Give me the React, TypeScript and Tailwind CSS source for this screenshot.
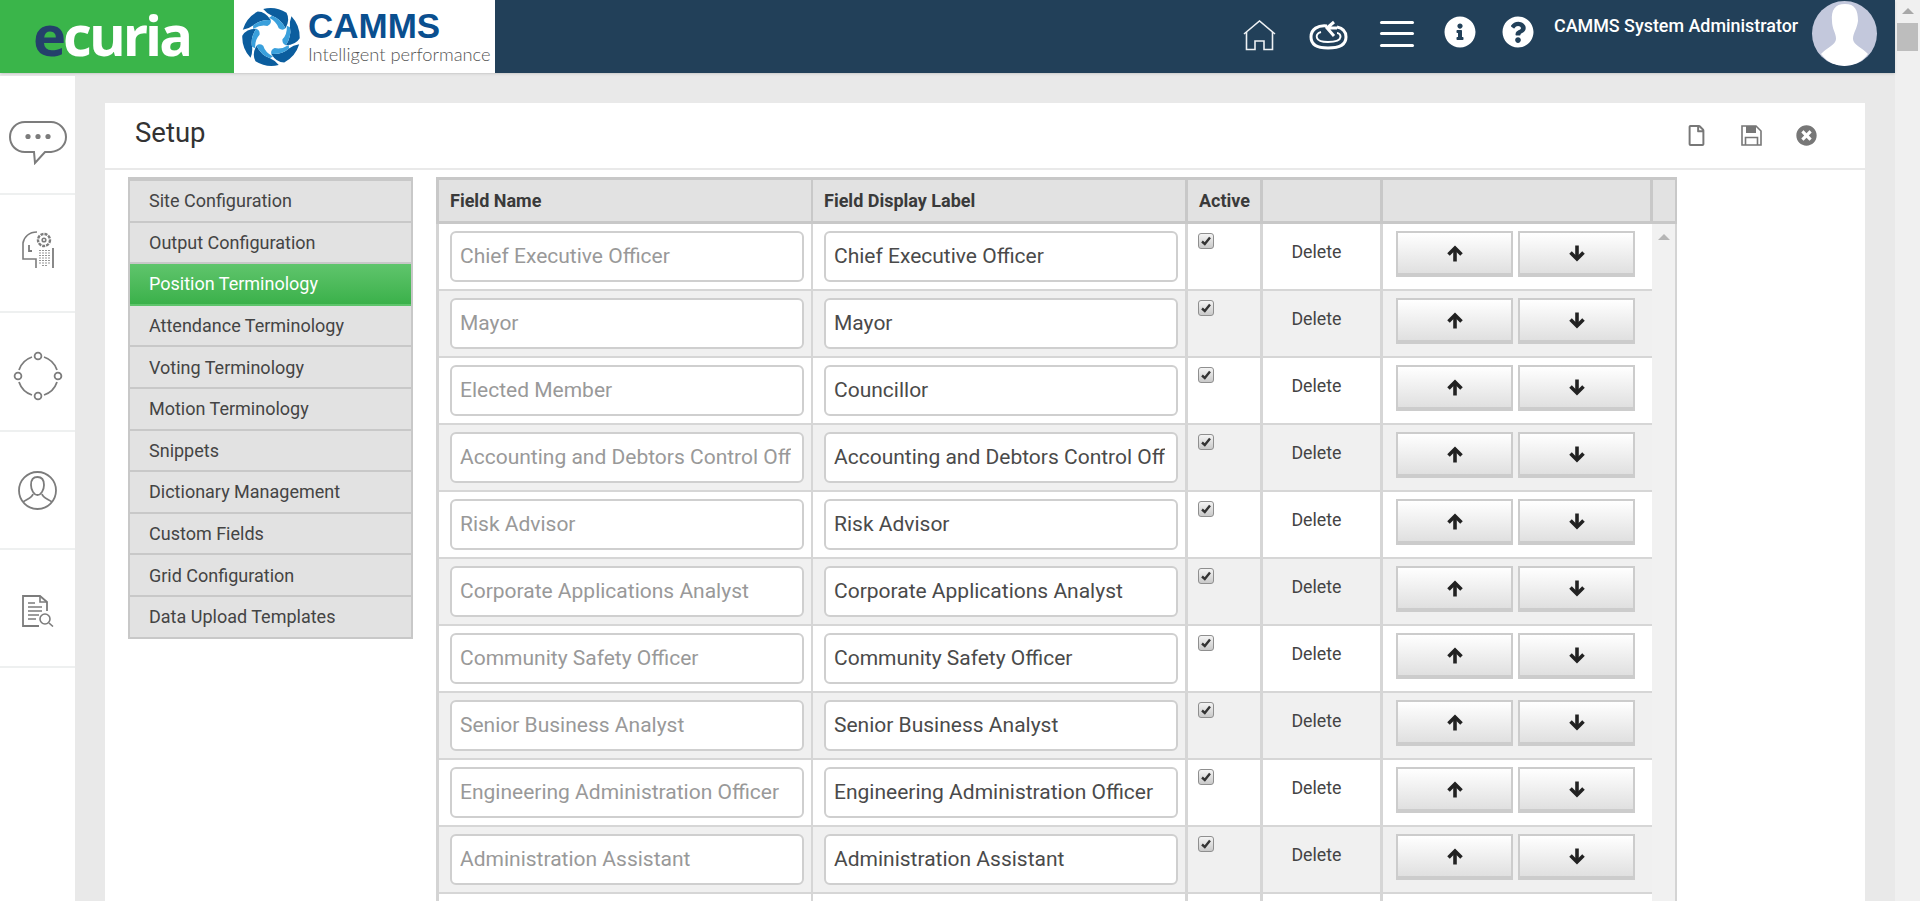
import { FaInfoCircle, FaQuestionCircle, FaRegFile, FaTimesCircle } from "react-icons/fa";

const menuItems = [
  "Site Configuration",
  "Output Configuration",
  "Position Terminology",
  "Attendance Terminology",
  "Voting Terminology",
  "Motion Terminology",
  "Snippets",
  "Dictionary Management",
  "Custom Fields",
  "Grid Configuration",
  "Data Upload Templates",
];

const rows = [
  ["Chief Executive Officer", "Chief Executive Officer"],
  ["Mayor", "Mayor"],
  ["Elected Member", "Councillor"],
  ["Accounting and Debtors Control Officer", "Accounting and Debtors Control Officer"],
  ["Risk Advisor", "Risk Advisor"],
  ["Corporate Applications Analyst", "Corporate Applications Analyst"],
  ["Community Safety Officer", "Community Safety Officer"],
  ["Senior Business Analyst", "Senior Business Analyst"],
  ["Engineering Administration Officer", "Engineering Administration Officer"],
  ["Administration Assistant", "Administration Assistant"],
  ["", ""],
];

function Swirl() {
  const angles = [0, 60, 120, 180, 240, 300];
  return (
    <svg width="62" height="62" viewBox="0 0 64 64" className="shrink-0">
      {angles.map((a) => (
        <g key={a} transform={`rotate(${a} 32 32)`}>
          <path d="M24 3 Q37 0 48 7 Q52 14 47 23 Q42 13 33 10 Q28 8 24 3Z" fill="#0b5d9e" />
          <path d="M33 10 Q42 13 47 23 Q44 26 40 23 Q38 16 30 12Z" fill="#3aa0dc" />
        </g>
      ))}
    </svg>
  );
}

function Avatar() {
  return (
    <svg width="65" height="65" viewBox="0 0 65 65" className="rounded-full bg-[#c3c8dc]">
      <path
        d="M33 3 C23 3 19 9 20 20 C20 28 24 32 24 38 C24 44 14 47 9 53 C16 62 24 65 32 65 C42 65 50 61 56 53 C51 47 41 44 41 38 C41 32 45 28 46 20 C46 9 43 3 33 3Z"
        fill="#fff"
      />
    </svg>
  );
}

function HomeIcon() {
  return (
    <svg width="33" height="31" viewBox="0 0 33 31" fill="none" stroke="#eef1f4" strokeWidth="1.6">
      <path d="M1 14 L16.5 1 L32 14" />
      <path d="M3.5 12 V29.5 H12 V21 H21 V29.5 H29.5 V12" />
    </svg>
  );
}

function CloudIcon() {
  return (
    <svg width="39" height="30" viewBox="0 0 39 30" fill="none" stroke="#fff" strokeWidth="3">
      <path d="M18 6 C9 5 2 9 2 17 C2 25 9 28 19 28 C30 28 37 25 37 17 C37 11 33 8 28 7" />
      <path d="M12 12 C8 13 7 16 8 18 C9 21 13 22 19 22 C26 22 31 21 31.500 17 C31.500 15 30 13 28 13" strokeWidth="2" />
      <path d="M25 2 L18 8 L25 16 M18 8 L28 8" strokeWidth="3" />
    </svg>
  );
}

function ChatIcon() {
  return (
    <svg width="58" height="44" viewBox="0 0 58 44" fill="none" stroke="#7c7c7c" strokeWidth="2">
      <path d="M16 1 H42 C50 1 57 8 57 16 C57 24 51 30 42 31 H36 L26 42 L25 31 H16 C7 31 1 24 1 16 C1 8 7 1 16 1Z" />
      <circle cx="19" cy="15.5" r="2.6" fill="#7c7c7c" stroke="none" />
      <circle cx="29" cy="15.5" r="2.6" fill="#7c7c7c" stroke="none" />
      <circle cx="39" cy="15.5" r="2.6" fill="#7c7c7c" stroke="none" />
    </svg>
  );
}

function HeadIcon() {
  return (
    <svg width="32" height="38" viewBox="0 0 32 38" fill="none" stroke="#7c7c7c" strokeWidth="1.6">
      <path d="M15 1 C7 1 2 6 1 12 V28 H14 V37" />
      <path d="M7 14 V20 H10" strokeWidth="1.8" />
      <circle cx="22" cy="9" r="6" strokeDasharray="3 1" strokeWidth="2.4" />
      <circle cx="22" cy="9" r="1.8" />
      <path d="M31 17 V37" strokeWidth="1.8" />
      <path d="M18 19 V34 M21 19 V36 M24 19 V36 M27 19 V34" strokeDasharray="1 1.5" />
    </svg>
  );
}

function CycleIcon() {
  return (
    <svg width="50" height="50" viewBox="0 0 50 50" fill="none" stroke="#7c7c7c" strokeWidth="1.8">
      <circle cx="25" cy="5" r="3.4" />
      <circle cx="25" cy="45" r="3.4" />
      <circle cx="5" cy="25" r="3.4" />
      <circle cx="45" cy="25" r="3.4" />
      <path d="M31 6 C37 8 42 13 44 19 M44 31 C42 37 37 42 31 44 M19 44 C13 42 8 37 6 31 M6 19 C8 13 13 8 19 6" />
    </svg>
  );
}

function PersonIcon() {
  return (
    <svg width="39" height="39" viewBox="0 0 39 39" fill="none" stroke="#7c7c7c" strokeWidth="1.8">
      <circle cx="19.5" cy="19.5" r="18.5" />
      <path d="M13 14 C13 8 16 6 19.5 6 C23 6 26 8 26 14 C26 19 23 24 19.5 24 C16 24 13 19 13 14Z" />
      <path d="M15 23 C14 27 9 28 5 31 M24 23 C25 27 30 28 34 31" />
    </svg>
  );
}

function DocSearchIcon() {
  return (
    <svg width="32" height="32" viewBox="0 0 32 32" fill="none" stroke="#7c7c7c" strokeWidth="1.6">
      <path d="M25 16 V7 L18 1 H1 V31 H17" strokeWidth="1.8" />
      <path d="M18 1 V7 H25" />
      <path d="M6 8 H13 M6 12 H20 M6 16 H20 M6 20 H17 M6 24 H14" />
      <circle cx="23" cy="24" r="5" />
      <path d="M27 28 L31 31.5" />
    </svg>
  );
}

function SaveIcon() {
  return (
    <svg width="21" height="21" viewBox="0 0 21 21" fill="none" stroke="#777" strokeWidth="1.6">
      <path d="M1 1 H15 L20 6 V20 H1Z" />
      <path d="M5 1 V8 H15 V1" fill="#777" stroke="none" />
      <path d="M4.500 20 V12.500 H16.500 V20" />
    </svg>
  );
}

function ArrowIcon({ down }: { down?: boolean }) {
  return (
    <svg width="16" height="17" viewBox="0 0 16 17" fill="none" stroke="#222" strokeWidth="3.6" className={down ? "rotate-180" : ""}>
      <path d="M8 16.500 V3" />
      <path d="M1.500 9.500 L8 3 L14.500 9.500" />
    </svg>
  );
}

function CheckBox() {
  return (
    <div className="w-4 h-4 rounded-[3px] border border-[#8f8f8f] bg-gradient-to-b from-[#f4f4f4] to-[#c9c9c9] flex items-center justify-center">
      <svg width="12" height="12" viewBox="0 0 12 12" fill="none" stroke="#333" strokeWidth="2.4">
        <path d="M2 6.5 L4.8 9 L10 2.5" />
      </svg>
    </div>
  );
}

function MoveButton({ children }: { children: React.ReactNode }) {
  return (
    <button className="w-[117px] h-[46px] border-2 border-b-[4px] border-[#cccccc] bg-gradient-to-b from-[#ffffff] to-[#e0e0e0] flex items-center justify-center">
      {children}
    </button>
  );
}

function TextBox({ text, muted }: { text: string; muted?: boolean }) {
  return (
    <div
      className={`w-[354px] h-[51px] bg-white border-2 border-[#cfcfcf] rounded-[6px] pl-[8px] pr-[11px] flex items-center text-[21px] ${
        muted ? "text-[#999999]" : "text-[#4a4a4a]"
      }`}
    >
      <div className="overflow-hidden whitespace-nowrap w-full">{text}</div>
    </div>
  );
}

function App() {
  return (
    <div className="flex w-full h-[901px] overflow-hidden bg-[#f0f0f0] font-['Roboto',sans-serif]">
      <div className="w-[1895px] h-full flex flex-col bg-[#e9e9e9]">
        {/* Top bar */}
        <div className="h-[73px] shrink-0 flex bg-[#224059] shadow-sm">
          <div className="w-[234px] bg-[#3ab54a] flex items-center pl-[33px] pb-[6px] text-[56px] font-['Open_Sans',sans-serif] font-bold tracking-[-3px] leading-[66px] text-white">
            <span className="text-[#24406b]">e</span>curia
          </div>
          <div className="w-[261px] bg-white flex items-center pl-[6px] gap-[6px]">
            <Swirl />
            <div className="flex flex-col">
              <span className="font-['Liberation_Sans',sans-serif] font-bold text-[35px] leading-[34px] text-[#0a4f8f]">CAMMS</span>
              <span className="font-['Lato',sans-serif] font-light text-[18.3px] leading-[22px] text-[#555] whitespace-nowrap">Intelligent performance</span>
            </div>
          </div>
          <div className="flex-1 flex items-center pl-[748px]">
            <div className="-mt-[3px] flex items-center">
              <HomeIcon />
              <div className="ml-[33px]">
                <CloudIcon />
              </div>
              <div className="ml-[32px] -mt-[3px] w-[34px] flex flex-col gap-[8.5px]">
                <div className="h-[3px] bg-white rounded-full" />
                <div className="h-[3px] bg-white rounded-full" />
                <div className="h-[3px] bg-white rounded-full" />
              </div>
              <FaInfoCircle className="ml-[30px] -mt-[7px] text-white text-[32px]" />
              <FaQuestionCircle className="ml-[26px] -mt-[7px] text-white text-[32px]" />
            </div>
            <div className="ml-[20px] w-[258px] -mt-[21px] text-white text-[17.9px] font-medium whitespace-nowrap">CAMMS System Administrator</div>
            <div className="-mt-[6px]">
              <Avatar />
            </div>
          </div>
        </div>

        <div className="flex-1 flex pt-[3px] min-h-0">
          {/* Left icon rail */}
          <div className="w-[75px] shrink-0 bg-white flex flex-col">
            <div className="h-[119px] flex items-center justify-center border-b-2 border-[#eef0f0]">
              <div className="mt-4 flex">
                <ChatIcon />
              </div>
            </div>
            <div className="h-[118px] flex items-center justify-center border-b-2 border-[#eef0f0]">
              <div className="-mt-[7px] flex">
                <HeadIcon />
              </div>
            </div>
            <div className="h-[119px] flex items-center justify-center border-b-2 border-[#eef0f0]">
              <div className="mt-[8px] flex">
                <CycleIcon />
              </div>
            </div>
            <div className="h-[118px] flex items-center justify-center border-b-2 border-[#eef0f0]">
              <PersonIcon />
            </div>
            <div className="h-[118px] flex items-center justify-center border-b-2 border-[#eef0f0]">
              <div className="mt-[6px] flex">
                <DocSearchIcon />
              </div>
            </div>
          </div>

          {/* Panel */}
          <div className="flex-1 min-w-0 px-[30px] pt-[27px]">
            <div className="bg-white h-full flex flex-col">
              <div className="h-[67px] shrink-0 border-b-2 border-[#e9e9e9] flex items-center pl-[30px]">
                <h1 className="text-[27.5px] text-[#333] mb-[6px]">Setup</h1>
                <div className="ml-auto flex items-center text-[#777777] text-[21px] pr-[48px]">
                  <FaRegFile className="mr-[-1px]" />
                  <div className="ml-[35px] flex">
                    <SaveIcon />
                  </div>
                  <FaTimesCircle className="ml-[34px]" />
                </div>
              </div>

              <div className="flex-1 min-h-0 flex pl-[23px] pt-[7px] gap-[23px]">
                {/* Setup menu */}
                <div className="w-[285px] h-max border-2 border-t-[4px] border-[#c8c8c8] bg-[#e2e2e2]">
                  {menuItems.map((item, i) => (
                    <div
                      key={item}
                      className={`flex items-center pl-[19px] text-[18px] ${
                        i < menuItems.length - 1 ? "h-[41.6px] border-b-2 border-[#c8c8c8]" : "h-[40px]"
                      } ${
                        item === "Position Terminology"
                          ? "bg-gradient-to-b from-[#5fc56c] to-[#3ab14a] text-white border-transparent"
                          : "text-[#444444]"
                      }`}
                    >
                      {item}
                    </div>
                  ))}
                </div>

                {/* Terminology grid */}
                <div className="w-[1241px] flex flex-col">
                  <div className="h-[47px] shrink-0 flex bg-[#e2e2e2] border-[3px] border-r-2 border-[#c8c8c8] font-bold text-[18px] text-[#3a3a3a]">
                    <div className="w-[374px] border-r-2 border-[#c8c8c8] pl-[11px] flex items-center">Field Name</div>
                    <div className="w-[375px] border-r-[3px] border-[#c8c8c8] pl-[11px] flex items-center">Field Display Label</div>
                    <div className="w-[75px] border-r-[3px] border-[#c8c8c8] pl-[11px] flex items-center">Active</div>
                    <div className="w-[120px] border-r-[3px] border-[#c8c8c8]" />
                    <div className="w-[270px] border-r-[3px] border-[#c8c8c8]" />
                    <div className="flex-1" />
                  </div>
                  <div className="flex-1 min-h-0 flex overflow-hidden border-l-[3px] border-r-2 border-[#d4d4d4]">
                    <div className="w-[1213px]">
                      {rows.map(([name, label], i) => (
                        <div key={i} className={`h-[67px] flex border-b-2 border-[#d6d6d6] ${i % 2 === 1 ? "bg-[#f0f0f0]" : "bg-white"}`}>
                          <div className="w-[374px] border-r-2 border-[#d6d6d6] pl-[11px] pt-[7px]">
                            {name && <TextBox text={name} muted />}
                          </div>
                          <div className="w-[375px] border-r-[3px] border-[#d6d6d6] pl-[11px] pt-[7px]">
                            {label && <TextBox text={label} />}
                          </div>
                          <div className="w-[75px] border-r-[3px] border-[#d6d6d6] pl-[10px] pt-[9px]">
                            {name && <CheckBox />}
                          </div>
                          <div className="w-[120px] border-r-[3px] border-[#d6d6d6] flex justify-center pt-[15px] pr-[10px] text-[17.8px] text-[#444444]">
                            {name && "Delete"}
                          </div>
                          <div className="flex-1 flex gap-[5px] pl-[13px] pt-[7px]">
                            {name && (
                              <>
                                <MoveButton>
                                  <ArrowIcon />
                                </MoveButton>
                                <MoveButton>
                                  <ArrowIcon down />
                                </MoveButton>
                              </>
                            )}
                          </div>
                        </div>
                      ))}
                    </div>
                    <div className="flex-1 bg-[#f1f1f1] flex justify-center pt-[10px]">
                      <div className="w-0 h-0 border-x-[6px] border-x-transparent border-b-[6px] border-b-[#b5b5b5]" />
                    </div>
                  </div>
                </div>
              </div>
            </div>
          </div>
        </div>
      </div>

      {/* Page scrollbar */}
      <div className="flex-1 flex flex-col items-center pt-[8px]">
        <div className="w-0 h-0 border-x-[6px] border-x-transparent border-b-[6px] border-b-[#a8a8a8]" />
        <div className="mt-[9px] w-[21px] h-[28px] bg-[#bdbdbd]" />
      </div>
    </div>
  );
}

export default App;
